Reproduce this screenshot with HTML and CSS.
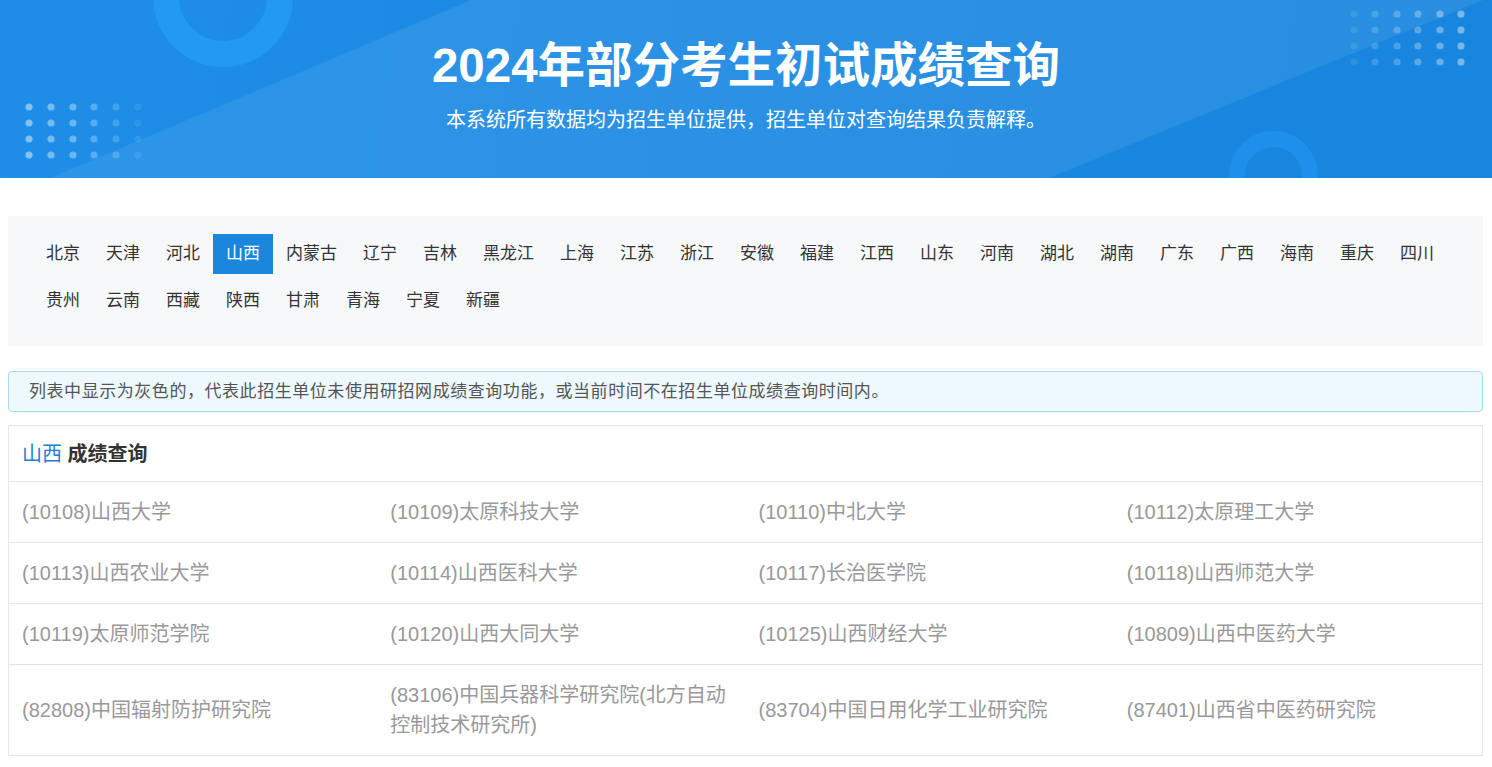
FILE: index.html
```html
<!DOCTYPE html>
<html lang="zh-CN">
<head>
<meta charset="utf-8">
<title>2024年部分考生初试成绩查询</title>
<link rel="stylesheet" href="styles.css">
</head>
<body>
<header class="banner">
  <svg class="banner-deco" width="1492" height="178" viewBox="0 0 1492 178" aria-hidden="true">
    <polygon points="50,178 471,0 1483,0 1049,178" fill="#ffffff" fill-opacity="0.07"/>
    <circle cx="223" cy="-3" r="57" fill="none" stroke="#2499f3" stroke-width="26"/>
    <circle cx="1273.5" cy="175.5" r="36.5" fill="none" stroke="#1e90ec" stroke-width="16"/>
    <g fill="#ffffff">
      <g fill-opacity="0.45"><circle cx="29" cy="107" r="3.6"/><circle cx="29" cy="123" r="3.6"/><circle cx="29" cy="139" r="3.6"/><circle cx="29" cy="155" r="3.6"/></g>
      <g fill-opacity="0.4"><circle cx="51" cy="107" r="3.6"/><circle cx="51" cy="123" r="3.6"/><circle cx="51" cy="139" r="3.6"/><circle cx="51" cy="155" r="3.6"/></g>
      <g fill-opacity="0.34"><circle cx="73" cy="107" r="3.6"/><circle cx="73" cy="123" r="3.6"/><circle cx="73" cy="139" r="3.6"/><circle cx="73" cy="155" r="3.6"/></g>
      <g fill-opacity="0.27"><circle cx="94" cy="107" r="3.6"/><circle cx="94" cy="123" r="3.6"/><circle cx="94" cy="139" r="3.6"/><circle cx="94" cy="155" r="3.6"/></g>
      <g fill-opacity="0.18"><circle cx="116" cy="107" r="3.6"/><circle cx="116" cy="123" r="3.6"/><circle cx="116" cy="139" r="3.6"/><circle cx="116" cy="155" r="3.6"/></g>
      <g fill-opacity="0.09"><circle cx="138" cy="107" r="3.6"/><circle cx="138" cy="123" r="3.6"/><circle cx="138" cy="139" r="3.6"/><circle cx="138" cy="155" r="3.6"/></g>
      <g fill-opacity="0.09"><circle cx="1354" cy="14" r="3.6"/><circle cx="1354" cy="30" r="3.6"/><circle cx="1354" cy="46" r="3.6"/><circle cx="1354" cy="62" r="3.6"/></g>
      <g fill-opacity="0.16"><circle cx="1375" cy="14" r="3.6"/><circle cx="1375" cy="30" r="3.6"/><circle cx="1375" cy="46" r="3.6"/><circle cx="1375" cy="62" r="3.6"/></g>
      <g fill-opacity="0.22"><circle cx="1397" cy="14" r="3.6"/><circle cx="1397" cy="30" r="3.6"/><circle cx="1397" cy="46" r="3.6"/><circle cx="1397" cy="62" r="3.6"/></g>
      <g fill-opacity="0.28"><circle cx="1418" cy="14" r="3.6"/><circle cx="1418" cy="30" r="3.6"/><circle cx="1418" cy="46" r="3.6"/><circle cx="1418" cy="62" r="3.6"/></g>
      <g fill-opacity="0.34"><circle cx="1440" cy="14" r="3.6"/><circle cx="1440" cy="30" r="3.6"/><circle cx="1440" cy="46" r="3.6"/><circle cx="1440" cy="62" r="3.6"/></g>
      <g fill-opacity="0.42"><circle cx="1461" cy="14" r="3.6"/><circle cx="1461" cy="30" r="3.6"/><circle cx="1461" cy="46" r="3.6"/><circle cx="1461" cy="62" r="3.6"/></g>
    </g>
  </svg>
  <div class="banner-text">
    <h1 class="banner-title">2024年部分考生初试成绩查询</h1>
    <p class="banner-sub">本系统所有数据均为招生单位提供，招生单位对查询结果负责解释。</p>
  </div>
</header>

<main class="main">
  <nav class="provinces">
    <a class="prov">北京</a><a class="prov">天津</a><a class="prov">河北</a><a class="prov active">山西</a><a class="prov">内蒙古</a><a class="prov">辽宁</a><a class="prov">吉林</a><a class="prov">黑龙江</a><a class="prov">上海</a><a class="prov">江苏</a><a class="prov">浙江</a><a class="prov">安徽</a><a class="prov">福建</a><a class="prov">江西</a><a class="prov">山东</a><a class="prov">河南</a><a class="prov">湖北</a><a class="prov">湖南</a><a class="prov">广东</a><a class="prov">广西</a><a class="prov">海南</a><a class="prov">重庆</a><a class="prov">四川</a><a class="prov">贵州</a><a class="prov">云南</a><a class="prov">西藏</a><a class="prov">陕西</a><a class="prov">甘肃</a><a class="prov">青海</a><a class="prov">宁夏</a><a class="prov">新疆</a>
  </nav>

  <div class="notice">列表中显示为灰色的，代表此招生单位未使用研招网成绩查询功能，或当前时间不在招生单位成绩查询时间内。</div>

  <section class="result">
    <div class="result-head"><span class="result-prov">山西</span> 成绩查询</div>
    <div class="result-grid">
      <div class="cell">(10108)山西大学</div>
      <div class="cell">(10109)太原科技大学</div>
      <div class="cell">(10110)中北大学</div>
      <div class="cell">(10112)太原理工大学</div>
      <div class="cell">(10113)山西农业大学</div>
      <div class="cell">(10114)山西医科大学</div>
      <div class="cell">(10117)长治医学院</div>
      <div class="cell">(10118)山西师范大学</div>
      <div class="cell">(10119)太原师范学院</div>
      <div class="cell">(10120)山西大同大学</div>
      <div class="cell">(10125)山西财经大学</div>
      <div class="cell">(10809)山西中医药大学</div>
      <div class="cell">(82808)中国辐射防护研究院</div>
      <div class="cell">(83106)中国兵器科学研究院(北方自动控制技术研究所)</div>
      <div class="cell">(83704)中国日用化学工业研究院</div>
      <div class="cell">(87401)山西省中医药研究院</div>
    </div>
  </section>
</main>
</body>
</html>
```

FILE: styles.css
```css
* { box-sizing: border-box; }

html, body {
  margin: 0;
  padding: 0;
  background: #ffffff;
}

body {
  font-family: "Liberation Sans", "Noto Sans CJK SC", sans-serif;
  color: #333333;
}

.banner {
  position: relative;
  height: 178px;
  overflow: hidden;
  background: linear-gradient(100deg, #1e8ee8 0%, #1b89e2 45%, #1886de 100%);
  color: #ffffff;
}

.banner-deco {
  position: absolute;
  left: 0;
  top: 0;
}

.banner-text {
  position: relative;
  display: flex;
  flex-direction: column;
  align-items: center;
  padding-top: 36px;
}

.banner-title {
  margin: 0;
  font-size: 47.5px;
  line-height: 60px;
  font-weight: bold;
  letter-spacing: 0;
}

.banner-sub {
  margin: 10px 0 0;
  font-size: 20px;
  line-height: 28px;
}

.main {
  padding: 38px 9px 12px 8px;
}

.provinces {
  display: flex;
  flex-wrap: wrap;
  background: #f6f8fa;
  padding: 18px 25px 18px;
}

.prov {
  display: block;
  padding: 0 13px;
  height: 40px;
  line-height: 40px;
  margin-bottom: 7px;
  font-size: 17px;
  color: #333333;
  cursor: pointer;
}

.prov.active {
  background: #1a86dc;
  color: #ffffff;
}

.notice {
  margin-top: 25px;
  border: 1px solid #a9dcf2;
  border-radius: 4px;
  background: #eef9fe;
  padding: 7px 20px;
  font-size: 17px;
  line-height: 25px;
  letter-spacing: 0.55px;
  color: #555555;
}

.result {
  margin-top: 13px;
  border: 1px solid #e6e6e6;
}

.result-head {
  padding: 13px 13px 12px;
  font-size: 20px;
  line-height: 30px;
  font-weight: bold;
  color: #333333;
  border-bottom: 1px solid #e6e6e6;
}

.result-prov {
  font-weight: normal;
  color: #1a7fd4;
}

.result-grid {
  display: grid;
  grid-template-columns: repeat(4, 1fr);
}

.cell {
  display: flex;
  align-items: center;
  padding: 15px 13px;
  font-size: 20px;
  line-height: 30px;
  color: #999999;
  border-top: 1px solid #e6e6e6;
}

.cell:nth-child(-n+4) {
  border-top: none;
}
```
